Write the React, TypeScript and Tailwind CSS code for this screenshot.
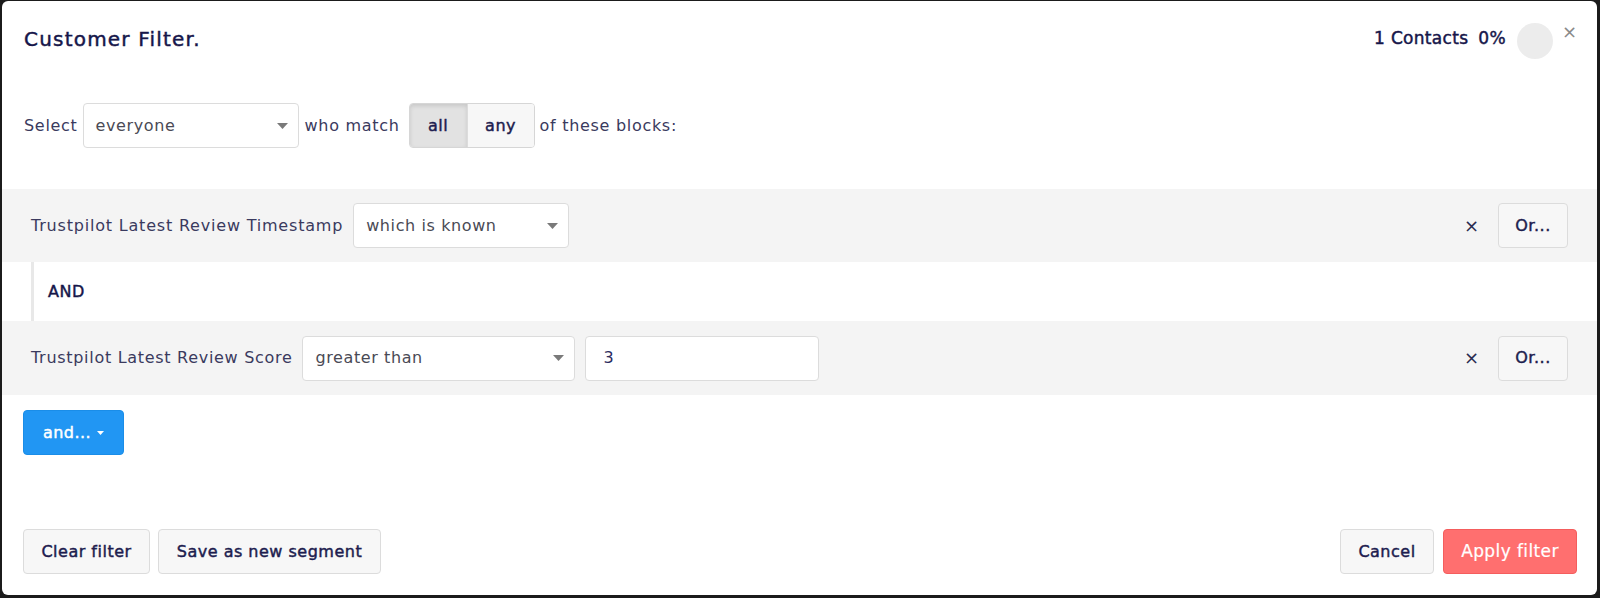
import React from 'react';

// DejaVu has no semibold face, so the medium weight is faked with a thin stroke
const semi = '[-webkit-text-stroke:0.45px_currentColor]';

const Caret: React.FC<{ className?: string }> = ({ className }) => (
    <svg width="11" height="6" viewBox="0 0 11 6" className={className}>
        <path d="M0 0 L11 0 L5.5 6 Z" fill="currentColor" />
    </svg>
);

const SelectBox: React.FC<{ value: string; width: string }> = ({ value, width }) => (
    <div className={`flex h-[45px] ${width} items-center justify-between rounded border border-[#dcdcdc] bg-white pl-3 pr-[10px] text-[16px] tracking-[0.6px] text-[#4a4a55]`}>
        <span>{value}</span>
        <Caret className="text-[#7a7a7a]" />
    </div>
);

const GhostButton: React.FC<{ label: string; className?: string }> = ({ label, className }) => (
    <button className={`h-[45px] rounded border border-[#dcdcdc] bg-[#f7f7f7] text-[16px] tracking-[0.5px] text-[#1d1d4f] ${semi} ${className ?? ''}`}>
        {label}
    </button>
);

const RuleBlock: React.FC<{ children: React.ReactNode; h: string }> = ({ children, h }) => (
    <div className={`flex ${h} items-center bg-[#f4f4f4] pl-[29px] pr-[29px]`}>
        <div className="flex items-center">{children}</div>
        <div className="ml-auto flex items-center">
            <span className="mr-[19px] text-[18px] leading-none text-[#2b2b50]">×</span>
            <GhostButton label="Or..." className="w-[70px]" />
        </div>
    </div>
);

export default function App() {
    return (
        <div className="h-[598px] w-[1600px] bg-[#1b1b1b] pl-[2px] pr-[3px] pt-[1px] pb-[3px] font-['DejaVu_Sans',sans-serif]">
            <div className="flex h-full flex-col rounded-md bg-white">
                {/* header */}
                <div className="flex h-[76px] items-center pl-[22px] pr-[20px]">
                    <h1 className={`text-[20px] tracking-[1.2px] text-[#16164a] ${semi}`}>Customer Filter.</h1>
                    <div className="ml-auto flex items-center">
                        <span className={`text-[17px] tracking-[0.3px] text-[#16164a] ${semi}`}>1 Contacts</span>
                        <span className={`ml-[10px] text-[17px] tracking-[0.3px] text-[#16164a] ${semi}`}>0%</span>
                        <div className="ml-[11px] mt-[3px] h-[36px] w-[36px] rounded-full bg-[#ececec]" />
                        <span className="ml-[9px] -mt-[14px] text-[18px] leading-none text-[#8a8a8a]">×</span>
                    </div>
                </div>

                {/* select row */}
                <div className="mt-[26px] flex items-center pl-[22px] text-[16px] tracking-[0.7px] text-[#3a3a5e]">
                    <span className="mr-[5px]">Select</span>
                    <SelectBox value="everyone" width="w-[216px]" />
                    <span className="ml-[6px] mr-[9px]">who match</span>
                    <div className={`flex h-[45px] overflow-hidden rounded border border-[#d6d6d6] text-[16px] tracking-[0.5px] text-[#1d1d4f] ${semi}`}>
                        <div className="flex w-[57px] items-center justify-center bg-[#e2e2e2] shadow-[inset_0_2px_4px_rgba(0,0,0,0.12)]">all</div>
                        <div className="flex w-[67px] items-center justify-center border-l border-[#dcdcdc] bg-[#f7f7f7]">any</div>
                    </div>
                    <span className="ml-[5px]">of these blocks:</span>
                </div>

                {/* rules */}
                <div className="mt-[41px]">
                    <RuleBlock h="h-[73px]">
                        <span className="text-[16px] tracking-[0.8px] text-[#3a3a5e]">Trustpilot Latest Review Timestamp</span>
                        <div className="ml-[10px]">
                            <SelectBox value="which is known" width="w-[216px]" />
                        </div>
                    </RuleBlock>
                    <div className="flex h-[59px] items-center pl-[29px]">
                        <div className="flex h-full items-center border-l-[3px] border-[#e8e8e8] pl-[14px]">
                            <span className={`text-[16px] tracking-[0.5px] text-[#16164a] ${semi}`}>AND</span>
                        </div>
                    </div>
                    <RuleBlock h="h-[74px]">
                        <span className="text-[16px] tracking-[0.7px] text-[#3a3a5e]">Trustpilot Latest Review Score</span>
                        <div className="ml-[10px]">
                            <SelectBox value="greater than" width="w-[273px]" />
                        </div>
                        <div className="ml-[10px] flex h-[45px] w-[234px] items-center rounded border border-[#dcdcdc] bg-white pl-[17px] text-[16px] text-[#2b2b60]">
                            3
                        </div>
                    </RuleBlock>
                </div>

                <div className="mt-[15px] pl-[21px]">
                    <button className={`flex h-[45px] w-[101px] items-center justify-center gap-[6px] rounded border border-[#1a8de8] bg-[#2196f3] text-[16px] tracking-[0.4px] text-white ${semi}`}>
                        and...
                        <Caret className="h-[4px] w-[7px] text-white" />
                    </button>
                </div>

                {/* footer */}
                <div className="mt-auto mb-[21px] flex items-center pl-[21px] pr-[20px]">
                    <GhostButton label="Clear filter" className="w-[127px]" />
                    <GhostButton label="Save as new segment" className="ml-[8px] w-[223px]" />
                    <div className="ml-auto flex items-center">
                        <GhostButton label="Cancel" className="w-[94px]" />
                        <button className="ml-[9px] h-[45px] w-[134px] rounded border border-[#f45d5d] bg-[#ff6f6f] text-[17px] tracking-[0.4px] text-white [-webkit-text-stroke:0.2px_currentColor]">
                            Apply filter
                        </button>
                    </div>
                </div>
            </div>
        </div>
    );
}
